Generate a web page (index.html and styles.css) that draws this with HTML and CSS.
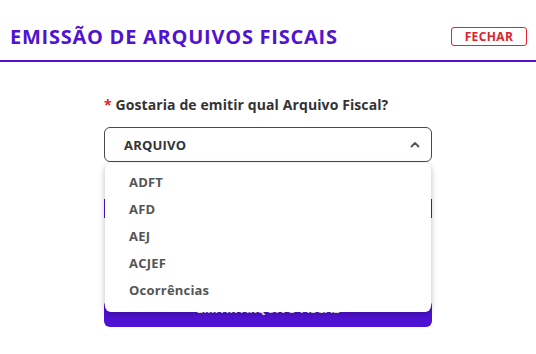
FILE: index.html
```html
<!DOCTYPE html>
<html lang="pt-BR">
<head>
  <meta charset="UTF-8" />
  <meta name="viewport" content="width=device-width, initial-scale=1.0"/>
  <title>Emissão de Arquivos Fiscais</title>
  <link rel="stylesheet" href="styles.css">
</head>
<body>
  <div class="header">
    <h1 class="title">EMISSÃO DE ARQUIVOS FISCAIS</h1>
    <button class="btn-close">FECHAR</button>
  </div>

  <div class="content">
    <label class="label"><span class="req">*</span> Gostaria de emitir qual Arquivo Fiscal?</label>

    <div class="select-wrap">
      <div class="select">
        <span>ARQUIVO</span>
        <svg class="chevron" width="10" height="7" viewBox="0 0 10 7">
          <path d="M1.5 5.5 L5 2 L8.5 5.5" fill="none" stroke="#555" stroke-width="1.8" stroke-linecap="round" stroke-linejoin="round"/>
        </svg>
      </div>
      <ul class="dropdown">
        <li>ADFT</li>
        <li>AFD</li>
        <li>AEJ</li>
        <li>ACJEF</li>
        <li>Ocorrências</li>
      </ul>
    </div>

    <div class="field-hidden"></div>

    <button class="btn-submit">EMITIR ARQUIVO FISCAL</button>
  </div>
</body>
</html>
```

FILE: styles.css
```css
body {
  margin: 0;
  background-color: #ffffff;
  font-family: "Open Sans", sans-serif;
  color: #333333;
}

.header {
  display: flex;
  align-items: center;
  justify-content: space-between;
  height: 48px;
  padding: 12px 9px 0 10px;
  border-bottom: 2px solid #5014d0;
}

.title {
  margin: 0;
  font-size: 20px;
  font-weight: 700;
  color: #5014d0;
  letter-spacing: 0.75px;
}

.btn-close {
  width: 76px;
  height: 19px;
  padding: 0;
  border: 1px solid #e8222e;
  border-radius: 3px;
  background: #ffffff;
  color: #e0212b;
  font-family: "Open Sans", sans-serif;
  font-size: 12px;
  font-weight: 700;
  letter-spacing: 0.4px;
}

.content {
  width: 328px;
  margin: 0 auto;
  padding-top: 34px;
}

.label {
  display: block;
  height: 18px;
  font-size: 14px;
  font-weight: 700;
  line-height: 18px;
  letter-spacing: 0.1px;
  color: #333333;
}

.req {
  color: #e0212b;
}

.select-wrap {
  position: relative;
  margin-top: 13px;
}

.select {
  display: flex;
  align-items: center;
  justify-content: space-between;
  height: 33px;
  padding: 0 11px 0 19px;
  border: 1px solid #4a4a4a;
  border-radius: 6px;
  font-size: 13px;
  font-weight: 700;
  letter-spacing: 0.2px;
}

.dropdown {
  position: absolute;
  top: 36px;
  left: 1px;
  right: 1px;
  margin: 0;
  padding: 6px 0 8px;
  list-style: none;
  background: #ffffff;
  border-radius: 6px;
  box-shadow: 0 2px 6px rgba(0, 0, 0, 0.25);
  z-index: 2;
}

.dropdown li {
  height: 27px;
  padding-left: 24px;
  font-size: 13px;
  font-weight: 700;
  line-height: 27px;
  letter-spacing: 0.2px;
  color: #555555;
}

.field-hidden {
  height: 19px;
  margin-top: 37px;
  border-left: 2px solid #5014d0;
  border-right: 2px solid #5014d0;
}

.btn-submit {
  display: block;
  width: 100%;
  height: 27px;
  margin-top: 82px;
  padding: 2px 0 0;
  border: none;
  border-radius: 6px;
  background: #5012d2;
  color: #ffffff;
  font-family: "Open Sans", sans-serif;
  font-size: 12px;
  font-weight: 700;
  line-height: 14px;
  vertical-align: top;
  display: flex;
  justify-content: center;
  align-items: flex-start;
}
```
